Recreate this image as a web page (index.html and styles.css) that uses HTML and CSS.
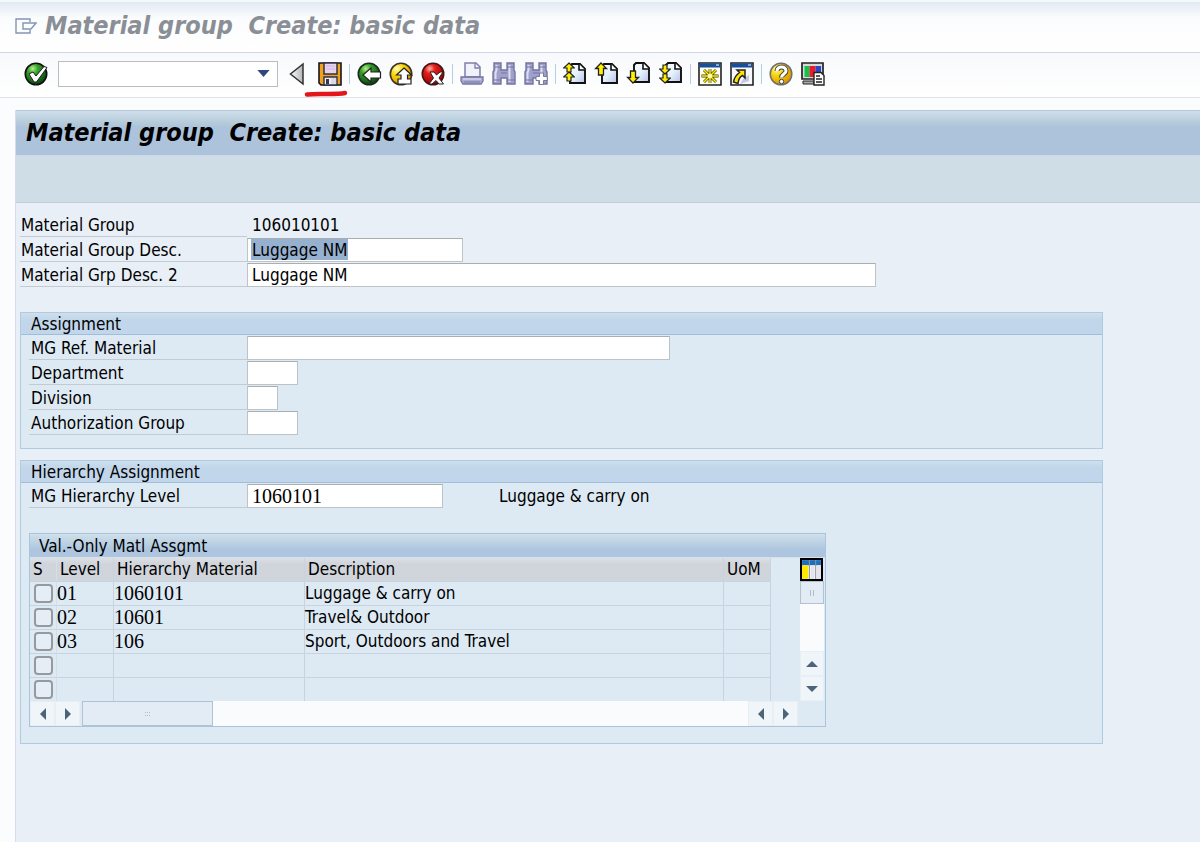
FILE: index.html
```html
<!DOCTYPE html>
<html lang="en">
<head>
<meta charset="utf-8">
<title>Material group Create: basic data</title>
<link rel="stylesheet" href="styles.css">
</head>
<body>
<svg class="defs" aria-hidden="true">
  <defs>
    <radialGradient id="green" cx=".35" cy=".25" r=".8"><stop offset="0" stop-color="#b8f090"/><stop offset=".3" stop-color="#37a32a"/><stop offset="1" stop-color="#06400c"/></radialGradient>
    <radialGradient id="yellow" cx=".3" cy=".25" r=".85"><stop offset="0" stop-color="#fffbc0"/><stop offset=".35" stop-color="#f8d80c"/><stop offset="1" stop-color="#d98a00"/></radialGradient>
    <radialGradient id="red" cx=".35" cy=".25" r=".8"><stop offset="0" stop-color="#ffb0a0"/><stop offset=".3" stop-color="#e81c1c"/><stop offset="1" stop-color="#8c0000"/></radialGradient>
    <linearGradient id="sheet" x1="0" y1="0" x2="1" y2="1"><stop offset="0" stop-color="#fff"/><stop offset=".5" stop-color="#e2f1fb"/><stop offset="1" stop-color="#b9bfe8"/></linearGradient>
    <linearGradient id="metal"><stop offset="0" stop-color="#fff"/><stop offset="1" stop-color="#b4b4b4"/></linearGradient>
    <symbol id="page" viewBox="0 0 24 24"><path d="M9 2H17L22 7V21H7V4Z" fill="url(#sheet)" stroke="#111" stroke-width="1.9"/><path d="M16 2V8H22" fill="#fff" stroke="#111" stroke-width="1.6"/></symbol>
    <symbol id="up" viewBox="0 0 12 11"><path d="M6 1 11.300 6H8V10H4V6H.700Z" fill="#fff000" stroke="#222" stroke-width="1.200"/></symbol>
    <symbol id="down" viewBox="0 0 12 11"><path d="M6 10 11.300 5H8V1H4V5H.700Z" fill="#fff000" stroke="#222" stroke-width="1.200"/></symbol>
    <symbol id="glasses" viewBox="0 0 24 24"><path d="M2 1H9V8H15V1H22V8L23 10V22H15V16H9V22H1V10L2 8Z" fill="#9fa0cc" stroke="#74749f" stroke-width="1.400"/><path d="M4.500 3V8L3.500 11V20M17.500 3V8V20" stroke="#dedef0" stroke-width="2" fill="none"/><path d="M2 5H9M15 5H22M1 18H9M15 18H23M9 11H15" stroke="#74749f"/></symbol>
  </defs>
</svg>

<header class="titlebar">
  <svg class="titlebar-icon" viewBox="0 0 22 16" aria-hidden="true"><path d="M15 4V1H1V15H15V12M8 5H21L16 11H8Z" fill="none" stroke="#8594b5" stroke-width="1.4"/></svg>
  <span class="title-text">Material group  Create: basic data</span>
</header>

<nav class="toolbar" aria-label="Standard toolbar">
  <button class="tool" aria-label="Enter"><svg viewBox="0 0 24 24"><circle cx="12" cy="12" r="10.7" fill="url(#green)" stroke="#111" stroke-width="1.6"/><path d="M5 12 9 10 12 14 20 4.500 23 5.500 12.500 20H10Z" fill="#fff" stroke="#202020" stroke-width="1"/></svg></button>
  <span class="command">
    <select class="command-select" aria-label="Command"><option></option></select>
    <svg class="command-arrow" viewBox="0 0 14 8" aria-hidden="true"><path d="M0 0H14L7 8Z" fill="#2d4780"/></svg>
  </span>
  <button class="tool" aria-label="Collapse command field"><svg viewBox="0 0 24 24"><path d="M17 2V22L4.500 12Z" fill="url(#metal)" stroke="#333" stroke-width="1.500"/></svg></button>
  <button class="tool" aria-label="Save"><svg viewBox="0 0 24 24"><path d="M1 1H23V23H3L1 21Z" fill="#f0a31a" stroke="#151522" stroke-width="1.600"/><path d="M6 1H19V12H6Z" fill="#e8d3ee" stroke="#30304a" stroke-width="1.500"/><path d="M8 4H17M8 7H17" stroke="#cdb4dc"/><path d="M6 15H19V23H6Z" fill="#f0edf4" stroke="#30304a" stroke-width="1.400"/><path d="M13 16H18V22H13Z" fill="#dcd9e6"/><path d="M8 17H11V22H8Z" fill="#36364e"/></svg>
    <svg class="marker" viewBox="0 0 44 6" aria-hidden="true"><path d="M3 3.500C14 2 30 4 41 2" fill="none" stroke="#e3161b" stroke-width="4.500" stroke-linecap="round"/></svg></button>
  <i class="sep"></i>
  <button class="tool" aria-label="Back"><svg viewBox="0 0 24 24"><circle cx="12" cy="12" r="10.700" fill="url(#green)" stroke="#1d2a1d" stroke-width="1.600"/><path d="M6 13 14 6V10H23.500V16H14V20Z" fill="#fff" stroke="#222" stroke-width="1.200"/></svg></button>
  <button class="tool" aria-label="Exit"><svg viewBox="0 0 24 24"><circle cx="12" cy="12" r="10.700" fill="url(#yellow)" stroke="#3b3424" stroke-width="1.600"/><path d="M15 6 22.500 13H18.500V17H22V22H9V17H12V13H7.500Z" fill="#fff" stroke="#222" stroke-width="1.200"/></svg></button>
  <button class="tool" aria-label="Cancel"><svg viewBox="0 0 24 24"><circle cx="12" cy="12" r="10.700" fill="url(#red)" stroke="#451616" stroke-width="1.600"/><path d="M9 10H13L15.500 13 19 10H22L18 16 22.500 22H18L15 18.500 11 22H8L12.500 16Z" fill="#fff" stroke="#222"/></svg></button>
  <i class="sep"></i>
  <button class="tool" aria-label="Print"><svg viewBox="0 0 24 24"><path d="M5 1H16L20 5V15H5Z" fill="#f1f1fa" stroke="#7f7fa9" stroke-width="1.500"/><path d="M15 1V6H20" fill="none" stroke="#7f7fa9" stroke-width="1.300"/><path d="M1 15H23V19L21 22H3L1 19Z" fill="#a9aad2" stroke="#7676a3" stroke-width="1.300"/><path d="M3 17H21" stroke="#e8e8f7"/><path d="M4 20H20" stroke="#7676a3"/></svg></button>
  <button class="tool" aria-label="Find"><svg viewBox="0 0 24 24"><use href="#glasses"/></svg></button>
  <button class="tool" aria-label="Find next"><svg viewBox="0 0 24 24"><use href="#glasses"/><path d="M15.500 11H19.500V14.500H23.300V18.500H19.500V22.500H15.500V18.500H12V14.500H15.500Z" fill="#fff" stroke="#7777a2"/></svg></button>
  <i class="sep"></i>
  <button class="tool" aria-label="First page"><svg viewBox="0 0 24 24"><use href="#page" width="24" height="24"/><use href="#up" x="0" y="0" width="12" height="11"/><use href="#up" x="0" y="9" width="12" height="11"/></svg></button>
  <button class="tool" aria-label="Previous page"><svg viewBox="0 0 24 24"><use href="#page" width="24" height="24"/><path d="M6 1 11.500 6.500H8.500V13H3.500V6.500H.6Z" fill="#fff000" stroke="#222" stroke-width="1.300"/></svg></button>
  <button class="tool" aria-label="Next page"><svg viewBox="0 0 24 24"><use href="#page" y="-1" width="24" height="24"/><path d="M6 21 11.500 15.500H8.500V9H3.500V15.500H.6Z" fill="#fff000" stroke="#222" stroke-width="1.300"/></svg></button>
  <button class="tool" aria-label="Last page"><svg viewBox="0 0 24 24"><use href="#page" y="-1" width="24" height="24"/><use href="#down" x="0" y="2" width="12" height="11"/><use href="#down" x="0" y="11" width="12" height="11"/></svg></button>
  <i class="sep"></i>
  <button class="tool" aria-label="New session"><svg viewBox="0 0 24 24"><path d="M1 1H23V23H1Z" fill="#fffef0" stroke="#222" stroke-width="1.600"/><path d="M1.500 1.500H22.500V5.500H1.500Z" fill="#174f9c"/><path d="M18 3H21" stroke="#fff"/><path d="M12 7V21M3.500 14H20.500M6 8 18 20M18 8 6 20" stroke="#3d3912" stroke-width="2.800"/><path d="M12 7V21M4 14H20M6 8 18 20M18 8 6 20" stroke="#fff000" stroke-width="1.500"/><circle cx="12" cy="14" r="2.300" fill="#fffbb0"/></svg></button>
  <button class="tool" aria-label="Create shortcut"><svg viewBox="0 0 24 24"><path d="M1 1H23V23H1Z" fill="#f7f8fc" stroke="#222" stroke-width="1.600"/><path d="M1.500 1.500H22.500V5.500H1.500Z" fill="#174f9c"/><path d="M18 3H21" stroke="#fff"/><path d="M13 17 19 13V19L10 22Z" fill="#c7c8dd"/><path d="M7 8H15V16L12.500 13.500C10 14.500 8.500 17 8 21.500L3.500 20C4 16.500 6 13 9.500 10.500Z" fill="#ffe600" stroke="#222" stroke-width="1.500"/></svg></button>
  <i class="sep"></i>
  <button class="tool" aria-label="Help"><svg viewBox="0 0 24 24"><circle cx="12" cy="12" r="10.800" fill="url(#yellow)" stroke="#73706a" stroke-width="1.500"/><path d="M8 9C8 3.500 17 3.500 17 9C17 12 12.500 12 12.500 15.500" fill="none" stroke="#444" stroke-width="5"/><path d="M8 9C8 3.500 17 3.500 17 9C17 12 12.500 12 12.500 15.500" fill="none" stroke="#fff" stroke-width="3"/><circle cx="12.500" cy="19.500" r="2.200" fill="#fff" stroke="#444"/></svg></button>
  <button class="tool" aria-label="Customize local layout"><svg viewBox="0 0 24 24"><path d="M1 1H22V17H1Z" fill="#d8d8d8" stroke="#222" stroke-width="1.700"/><path d="M3.500 4H8.500V15H3.500Z" fill="#12c24c"/><path d="M8.500 4H14.500V15H8.500Z" fill="#ea1b28"/><path d="M14.500 4H20V15H14.500Z" fill="#2945c8"/><path d="M2 19H13V22H2Z" fill="#aaa" stroke="#222"/><path d="M13 10.500H20L23 13.500V23H13Z" fill="#fff" stroke="#222" stroke-width="1.400"/><path d="M15 14H19M15 17H21M15 20H21" stroke="#222" stroke-width="1.300"/></svg></button>
</nav>

<main class="workspace">
  <h1 class="heading title-text">Material group  Create: basic data</h1>
  <div class="appbar"></div>

  <form class="content">
    <section class="fields basic">
      <div class="field"><span class="label">Material Group</span><output class="value">106010101</output></div>
      <div class="field"><label class="label" for="desc">Material Group Desc.</label><input class="box w-desc selected" id="desc" value="Luggage NM"></div>
      <div class="field"><label class="label" for="desc2">Material Grp Desc. 2</label><input class="box w-desc2" id="desc2" value="Luggage NM"></div>
    </section>

    <section class="group">
      <h2 class="group-title">Assignment</h2>
      <div class="fields">
        <div class="field"><label class="label" for="ref">MG Ref. Material</label><input class="box w-ref" id="ref"></div>
        <div class="field"><label class="label" for="dept">Department</label><input class="box w-four" id="dept"></div>
        <div class="field"><label class="label" for="div">Division</label><input class="box w-two" id="div"></div>
        <div class="field"><label class="label" for="auth">Authorization Group</label><input class="box w-four" id="auth"></div>
      </div>
    </section>

    <section class="group">
      <h2 class="group-title">Hierarchy Assignment</h2>
      <div class="fields">
        <div class="field"><label class="label" for="level">MG Hierarchy Level</label><input class="box w-level numeric" id="level" value="1060101"><span class="level-name">Luggage &amp; carry on</span></div>
      </div>

      <div class="grid">
        <h3 class="grid-title">Val.-Only Matl Assgmt</h3>
        <div class="grid-body">
          <table class="table">
            <colgroup><col class="c-s"><col class="c-level"><col class="c-material"><col class="c-desc"><col class="c-uom"></colgroup>
            <thead><tr><th>S</th><th>Level</th><th>Hierarchy Material</th><th>Description</th><th>UoM</th></tr></thead>
            <tbody>
              <tr><td><input type="checkbox" class="check" aria-label="Select row 1"></td><td class="numeric">01</td><td class="numeric">1060101</td><td>Luggage &amp; carry on</td><td></td></tr>
              <tr><td><input type="checkbox" class="check" aria-label="Select row 2"></td><td class="numeric">02</td><td class="numeric">10601</td><td>Travel&amp; Outdoor</td><td></td></tr>
              <tr><td><input type="checkbox" class="check" aria-label="Select row 3"></td><td class="numeric">03</td><td class="numeric">106</td><td>Sport, Outdoors and Travel</td><td></td></tr>
              <tr><td><input type="checkbox" class="check" aria-label="Select row 4"></td><td></td><td></td><td></td><td></td></tr>
              <tr><td><input type="checkbox" class="check" aria-label="Select row 5"></td><td></td><td></td><td></td><td></td></tr>
            </tbody>
          </table>
          <div class="vscroll">
            <button type="button" class="config" aria-label="Configuration"><svg viewBox="0 0 22 22"><path d="M1 1H21V21H1Z" fill="#fff" stroke="#000" stroke-width="2"/><path d="M2 2H20V7H2Z" fill="#1d6fbd"/><path d="M2 7H8V20H2Z" fill="#ffea00"/><path d="M10 7H14V20H10ZM16 7H20V20H16Z" fill="#e4e4ea"/><path d="M9 2V20M15 2V20" stroke="#8b94a5"/></svg></button>
            <div class="thumb"><svg viewBox="0 0 6 6"><path d="M1.500 0V6M4.500 0V6" stroke="#aebccb"/></svg></div>
            <div class="track"></div>
            <button type="button" class="arrow" aria-label="Scroll up"><svg viewBox="0 0 12 12"><path d="M0 9 6 3 12 9Z" fill="#4d6478"/></svg></button>
            <button type="button" class="arrow" aria-label="Scroll down"><svg viewBox="0 0 12 12"><path d="M0 3 6 9 12 3Z" fill="#4d6478"/></svg></button>
          </div>
        </div>
        <div class="hscroll">
          <button type="button" class="arrow" aria-label="First column"><svg viewBox="0 0 12 12"><path d="M9 0 3 6 9 12Z" fill="#4d6478"/></svg></button>
          <button type="button" class="arrow" aria-label="Next column"><svg viewBox="0 0 12 12"><path d="M3 0 9 6 3 12Z" fill="#4d6478"/></svg></button>
          <div class="thumb"><svg viewBox="0 0 6 6"><path d="M0 1.500H6M0 4.500H6" stroke="#aebccb" stroke-dasharray="1 1"/></svg></div>
          <div class="track"></div>
          <button type="button" class="arrow" aria-label="Scroll left"><svg viewBox="0 0 12 12"><path d="M9 0 3 6 9 12Z" fill="#4d6478"/></svg></button>
          <button type="button" class="arrow" aria-label="Scroll right"><svg viewBox="0 0 12 12"><path d="M3 0 9 6 3 12Z" fill="#4d6478"/></svg></button>
        </div>
      </div>
    </section>
  </form>
</main>
</body>
</html>
```

FILE: styles.css
```css
* { box-sizing: border-box; }

body {
  margin: 0;
  min-height: 100vh;
  display: flex;
  flex-direction: column;
  background: #fbfcfe;
  color: #000;
  font: 17px/24px "DejaVu Sans Condensed", "Noto Sans", sans-serif;
}

h1, h2, h3 { margin: 0; font-weight: normal; font-size: 17px; }
button { padding: 0; border: 0; background: none; font: inherit; }
svg { display: block; }
.defs { position: absolute; width: 0; height: 0; }

.title-text {
  font-family: "DejaVu Sans Condensed", "Noto Sans", sans-serif;
  font-size: 25px;
  font-weight: bold;
  font-style: italic;
  white-space: pre;
}

.titlebar {
  display: flex;
  align-items: center;
  gap: 8px;
  height: 53px;
  padding: 0 15px 2px;
  border-top: 2px solid #f4f8fb;
  border-bottom: 1px solid #ccd8e5;
  background: linear-gradient(#e1e9f1, #fbfcfe 16px, #fff);
  color: #8a8f96;
}
.titlebar-icon { width: 22px; height: 16px; }

.toolbar {
  display: flex;
  align-items: center;
  gap: 8px;
  height: 45px;
  padding: 0 24px 3px;
  border-bottom: 1px solid #dde2e8;
  background: linear-gradient(#f7f9fc, #fff);
}
.tool { position: relative; flex: none; width: 24px; height: 24px; }
.tool svg { width: 24px; height: 24px; overflow: visible; }
.tool .marker { position: absolute; top: 29px; left: -14px; width: 44px; height: 6px; }
.sep { width: 1px; height: 20px; margin: 0 -1px; background: #b8cde0; }

.command { display: grid; align-items: center; width: 220px; margin-left: 2px; }
.command-select {
  grid-area: 1 / 1;
  appearance: none;
  height: 26px;
  border: 1px solid #b9bdc0;
  border-radius: 0;
  background: #fff;
}
.command-arrow { grid-area: 1 / 1; justify-self: end; width: 13px; height: 7px; margin-right: 8px; pointer-events: none; }

.workspace {
  flex: 1;
  margin: 12px 0 0 15px;
  border-left: 1px solid #d4dfeb;
  background: #e8eff6;
}
.heading {
  height: 45px;
  padding-left: 10px;
  border-top: 1px solid #b6c7db;
  background: linear-gradient(#cfdeeb, #b5cbda 12px, #adc3db 16px);
  line-height: 44px;
}
.appbar {
  height: 48px;
  border-top: 2px solid #cedae7;
  border-bottom: 1px solid #bfcedb;
  background: #cfdde7;
}

.content { display: flex; flex-direction: column; gap: 11px; padding: 9px 97px 24px 4px; }
.basic { margin-bottom: 14px; }
.field { display: flex; align-items: flex-end; height: 25px; }
.label { width: 218px; height: 24px; border-bottom: 1px solid #c3cad0; line-height: 24px; padding-left: 2px; }
.basic .label { width: 227px; padding-left: 1px; }
.value { padding-left: 5px; }
.box {
  height: 24px;
  padding: 0 4px;
  border: 1px solid #bec3c8;
  border-top-color: #a9aeb3;
  border-radius: 0;
  background: #fff;
  color: #000;
  font: inherit;
}
.selected { background: linear-gradient(#96b0d0, #96b0d0) 3px 0 / 97px 21px no-repeat #fff; }
.w-desc { width: 216px; }
.w-desc2 { width: 629px; }
.w-ref { width: 423px; }
.w-four { width: 51px; }
.w-two { width: 31px; }
.w-level { width: 196px; }
.level-name { margin-left: 56px; }
.numeric, .box.numeric { font-family: "Liberation Serif", serif; font-size: 20px; }

.group { border: 1px solid #aecbe2; background: #ddeaf4; padding-bottom: 13px; }
.group-title {
  height: 22px;
  padding-left: 10px;
  border-bottom: 1px solid #a0bdd9;
  background: linear-gradient(#cfdfec, #c1d6ea 7px);
  line-height: 22px;
}
.group .fields { padding-left: 8px; }
.group + .group { padding-bottom: 16px; }

.grid { width: 797px; margin: 25px 0 0 8px; border: 1px solid #a9c5de; }
.grid-title {
  height: 24px;
  padding-left: 9px;
  border-bottom: 1px solid #d7e1ea;
  background: linear-gradient(#cfe0ea, #adc5df 16px);
  line-height: 24px;
}
.grid-body { display: flex; justify-content: space-between; padding-right: 1px; }
.table { table-layout: fixed; width: 741px; border-collapse: separate; border-spacing: 0; }
.table th, .table td { height: 24px; padding: 0; border-right: 1px solid #c7d4df; border-bottom: 1px solid #c7d4df; text-align: left; font-weight: normal; line-height: 23px; white-space: nowrap; }
.table th { padding-left: 3px; background: linear-gradient(#dde1e5, #d0d4db 6px); }
.table tr > :first-child { border-right-color: #d3dfe8; }
.table tbody tr:last-child td { height: 23px; border-bottom: 0; }
.c-s { width: 27px; }
.c-level { width: 57px; }
.c-material { width: 191px; }
.c-desc { width: 419px; }
.c-uom { width: 47px; }
.check {
  appearance: none;
  display: block;
  width: 19px;
  height: 19px;
  margin: 0 0 0 4px;
  border: 2px solid #969a9f;
  border-radius: 4px;
  background: #e5eef6;
}

.vscroll { display: flex; flex-direction: column; width: 24px; }
.config svg { width: 23px; height: 23px; }
.vscroll .thumb { height: 23px; }
.thumb { display: grid; place-items: center; border: 1px solid #b1c2d3; background: #e3ebf4; }
.thumb svg { width: 6px; height: 6px; }
.track { flex: 1; background: #fafbfc; }
.arrow { display: grid; place-items: center; width: 24px; height: 25px; border: 1px solid #e7eef4; background: #f0f5f9; }
.arrow svg { width: 12px; height: 12px; }
.hscroll { display: flex; height: 25px; padding-right: 27px; }
.hscroll .arrow { width: 25px; }
.hscroll .thumb { width: 131px; margin-left: 2px; }
```
